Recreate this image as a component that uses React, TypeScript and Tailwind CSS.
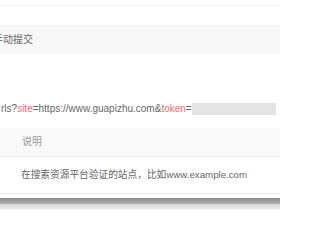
import React from "react";

export default function App() {
  return (
    <div
      className="w-[280px] h-[210px] bg-white overflow-hidden flex flex-col text-[10px] leading-none"
      style={{ fontFamily: '"Liberation Sans", Arial, "Noto Sans CJK SC", sans-serif' }}
    >
      <div className="h-[6px] shrink-0 border-b border-[#f3f3f3]" />
      <div className="h-[19px] shrink-0" />
      <div className="h-[29px] shrink-0 bg-[#f8f8f8] flex items-center">
        <span className="ml-[-7px] text-[#666] text-[10px]">手动提交</span>
      </div>
      <div className="h-[48px] shrink-0" />
      <div className="h-[13px] shrink-0 flex items-center">
        <span className="ml-[1px] text-[#666] whitespace-nowrap">
          rls?<span className="text-[#f56c6c]">site</span>=https://www.guapizhu.com&amp;<span className="text-[#f56c6c]">token</span>=
        </span>
        <div className="ml-auto mr-[4px] w-[90px] h-[12px] bg-[#e4e4e4]" />
      </div>
      <div className="h-[13px] shrink-0" />
      <div className="h-[29px] shrink-0 bg-[#f9f9f9] flex items-center border-b border-[#eeeeee]">
        <span className="ml-[22px] text-[#999]">说明</span>
      </div>
      <div className="h-[37px] shrink-0 flex items-center border-b border-[#ececec]">
        <span className="ml-[21px] text-[#666] text-[9.7px] whitespace-nowrap">在搜索资源平台验证的站点，比如www.example.com</span>
      </div>
      <div className="h-[4px] shrink-0" />
      <div className="h-[6px] shrink-0 bg-gradient-to-b from-[#8a8a8a] to-[#b5b5b5]" />
      <div className="flex-1 bg-gradient-to-b from-[#d8d8d8] to-[#f2f2f2]" />
    </div>
  );
}
